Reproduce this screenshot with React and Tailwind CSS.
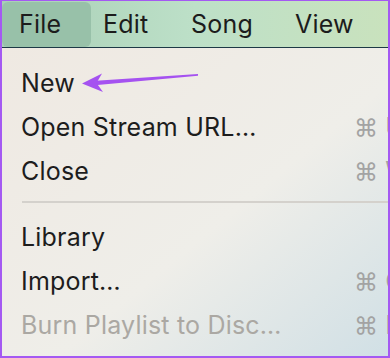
export default function App() {
  const rows1 = [
    { label: "New" },
    { label: "Open Stream URL…", key: "U" },
    { label: "Close", key: "W" },
  ];
  const rows2 = [
    { label: "Library" },
    { label: "Import…", key: "O" },
    { label: "Burn Playlist to Disc…", key: "B", disabled: true },
  ];

  const Row = ({ label, shortcut, disabled }) => (
    <div className="flex h-[44px] items-center pl-[19px]">
      <span className={disabled ? "text-[#aba8a3]" : "text-[#1d1d1d]"}>{label}</span>
      {shortcut && (
        <span className="ml-auto flex w-[78px] items-center gap-[7px] text-[#a3a3a3]">
          <span className="text-[24px]">⌘</span>
          <span>{shortcut}</span>
        </span>
      )}
    </div>
  );

  return (
    <div
      className="relative h-[358px] w-[390px] overflow-hidden border-2 border-t-[1px] border-[#a459f2] bg-[#efece6] text-[25px] tracking-[0.2px]"
      style={{ fontFamily: "Inter, 'Noto Sans', sans-serif" }}
    >
      <div className="flex h-[47px] border-b border-[#1d3946] bg-gradient-to-r from-[#a8cfb6] via-[#bde0c8] to-[#c9e2bd] pt-[1px] text-[#1c1c1c]">
        <div className="flex w-[89px] items-center rounded-[6px] bg-[#98c1a9] pl-[17px]">File</div>
        <div className="flex w-[88px] items-center pl-[12px]">Edit</div>
        <div className="flex w-[104px] items-center pl-[12px]">Song</div>
        <div className="flex items-center pl-[12px]">View</div>
      </div>

      <div className="h-full w-[430px] bg-gradient-to-br from-[#efe9e2] via-[#efeee9] to-[#c7dbe4] pt-[14px]">
        {rows1.map((r) => (
          <Row key={r.label} label={r.label} shortcut={r.key} />
        ))}
        <div className="ml-[20px] mt-[7px] mb-[13px] h-[2px] bg-[#d4d1cc]" />
        {rows2.map((r) => (
          <Row key={r.label} label={r.label} shortcut={r.key} disabled={r.disabled} />
        ))}
      </div>

      {/* callout arrow */}
      <svg
        className="absolute left-[76px] top-[67px]"
        width="124"
        height="28"
        viewBox="0 0 124 28"
      >
        <polygon points="14,13 120,6 120,7.8 14,17.5" fill="#a552f0" />
        <polygon points="4,15.5 24,5.5 18.5,15 25,24" fill="#a552f0" />
      </svg>
    </div>
  );
}
